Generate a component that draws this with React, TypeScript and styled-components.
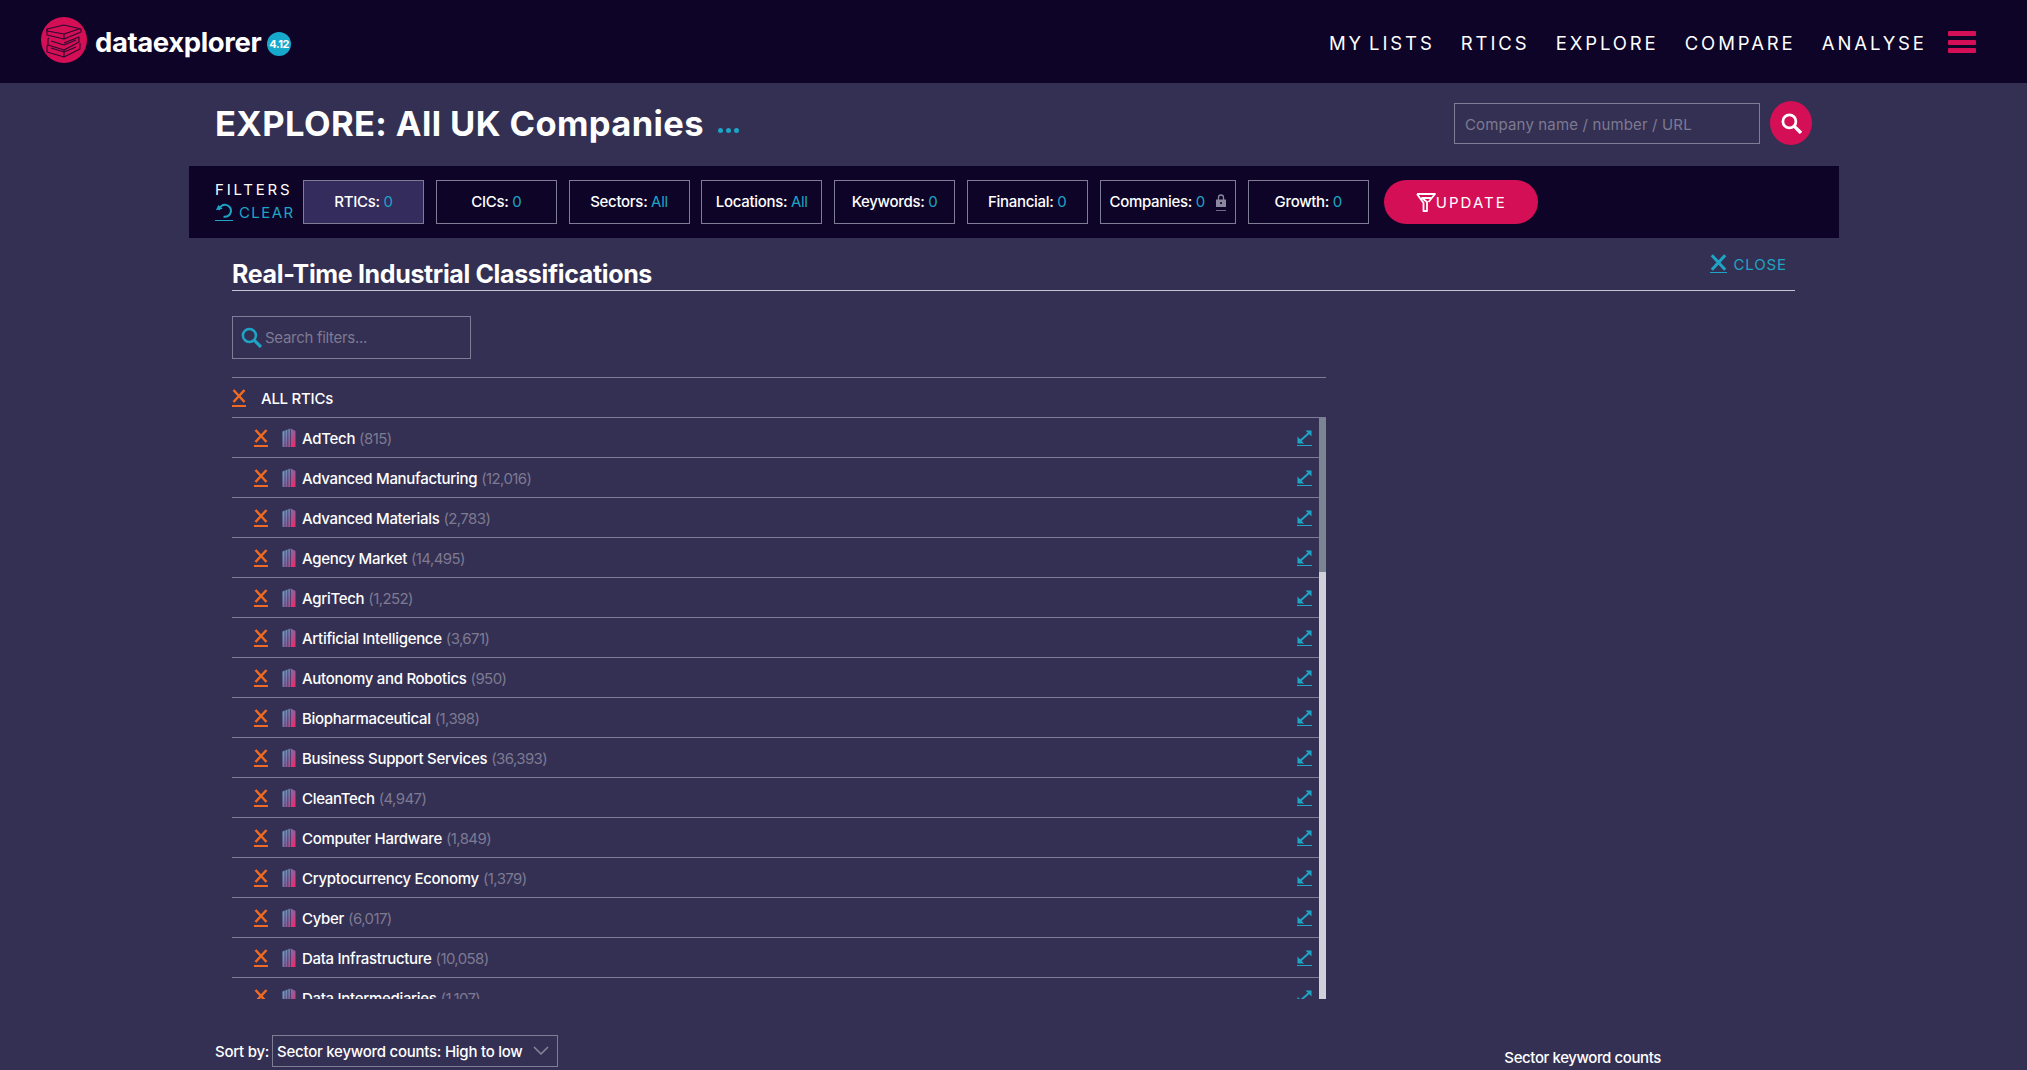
import styled, { createGlobalStyle } from "styled-components"

const rows = [
  ["AdTech", "815"],
  ["Advanced Manufacturing", "12,016"],
  ["Advanced Materials", "2,783"],
  ["Agency Market", "14,495"],
  ["AgriTech", "1,252"],
  ["Artificial Intelligence", "3,671"],
  ["Autonomy and Robotics", "950"],
  ["Biopharmaceutical", "1,398"],
  ["Business Support Services", "36,393"],
  ["CleanTech", "4,947"],
  ["Computer Hardware", "1,849"],
  ["Cryptocurrency Economy", "1,379"],
  ["Cyber", "6,017"],
  ["Data Infrastructure", "10,058"],
  ["Data Intermediaries", "1,107"],
]

const filters = [
  { label: "RTICs", value: "0", active: true },
  { label: "CICs", value: "0" },
  { label: "Sectors", value: "All" },
  { label: "Locations", value: "All" },
  { label: "Keywords", value: "0" },
  { label: "Financial", value: "0" },
  { label: "Companies", value: "0", locked: true },
  { label: "Growth", value: "0" },
]

function Logo() {
  return (
    <svg width="46" height="46" viewBox="0 0 46 46">
      <circle cx="23" cy="23" r="23" fill="#d40f55" />
      <g fill="none" stroke="#2a0a30" strokeWidth="1.1" strokeLinejoin="round">
        <path d="M6 12l17-4 17 4-2 0-15 5-17-3z" />
        <path d="M6 12v6l17 4 17-7v-3M23 17v5" />
        <path d="M8 21l-1 1v6l16 5 15-8v-5l-15 6" />
        <path d="M7 28l-1 1v6l17 5 16-8v-6M23 33v7" />
        <path d="M10 24l13 4 12-5M10 31l13 4 12-5" />
      </g>
    </svg>
  )
}

function CloseX({ size = 14 }: { size?: number }) {
  return (
    <svg width={size} height={size} viewBox="0 0 14 14">
      <path d="M1.5 1l11 12M12.5 1l-11 12" fill="none" stroke="currentColor" strokeWidth="2.5" />
    </svg>
  )
}

function Building({ id }: { id: string }) {
  return (
    <svg width="14" height="19" viewBox="0 0 14 19">
      <defs>
        <linearGradient id={id} x1="0" y1="0.15" x2="1" y2="0.8">
          <stop offset="0" stopColor="#6fa6c8" />
          <stop offset="0.5" stopColor="#7f6ba6" />
          <stop offset="1" stopColor="#ec2a70" />
        </linearGradient>
      </defs>
      <path d="M0.5 3.5L8.5 0.5 13.5 3v16H0.5z" fill={`url(#${id})`} />
      <path d="M3 2.5V19M5.8 1.5V19M8.5 0.5V19" stroke="#353053" strokeWidth="0.8" opacity="0.85" />
    </svg>
  )
}

function SearchGlyph({ size, stroke }: { size: number; stroke: number }) {
  return (
    <svg width={size} height={size} viewBox="0 0 20 20">
      <circle cx="8" cy="8" r="6.2" fill="none" stroke="currentColor" strokeWidth={stroke} />
      <path d="M12.5 12.5L19 19" stroke="currentColor" strokeWidth={stroke + 0.6} />
    </svg>
  )
}

function RowItem({ name, count, index }: { name: string; count: string; index: number }) {
  return (
    <Row>
      <OrangeMark>
        <CloseX />
      </OrangeMark>
      <BuildingSlot>
        <Building id={`building-${index}`} />
      </BuildingSlot>
      <RowName>{name}</RowName>
      <RowCount>({count})</RowCount>
      <ExpandLink>
        <svg width="15" height="14" viewBox="0 0 15 14">
          <path d="M2.5 11.5L12.5 2.5" stroke="currentColor" strokeWidth="2" />
          <path d="M8.5 0.5h6v6z" fill="currentColor" />
          <path d="M0.5 6.5v7h6.5z" fill="currentColor" />
        </svg>
      </ExpandLink>
    </Row>
  )
}

export default function App() {
  return (
    <>
      <GlobalStyle />
      <Header>
        <Brand>
          <Logo />
          <BrandName>dataexplorer</BrandName>
          <Version>4.12</Version>
        </Brand>
        <Nav>
          <NavLink $tight>MY LISTS</NavLink>
          <NavLink>RTICS</NavLink>
          <NavLink>EXPLORE</NavLink>
          <NavLink>COMPARE</NavLink>
          <NavLink>ANALYSE</NavLink>
          <Burger>
            <span />
            <span />
            <span />
          </Burger>
        </Nav>
      </Header>

      <TitleRow>
        <TitleGroup>
          <PageTitle>EXPLORE: All UK Companies</PageTitle>
          <Dots>
            <i />
            <i />
            <i />
          </Dots>
        </TitleGroup>
        <CompanySearch>
          <CompanyInput placeholder="Company name / number / URL" />
          <RoundSearch>
            <SearchGlyph size={21} stroke={2.6} />
          </RoundSearch>
        </CompanySearch>
      </TitleRow>

      <FilterBar>
        <FilterHead>
          <FilterTitle>FILTERS</FilterTitle>
          <ClearLink>
            <ClearIcon>
              <svg width="18" height="15" viewBox="0 0 18 15">
                <path d="M4 7a6 6 0 1 1 4.5 6.6" fill="none" stroke="currentColor" strokeWidth="2" />
                <path d="M0.5 6.5h7L4 2z" fill="currentColor" transform="rotate(-12 4 5)" />
              </svg>
            </ClearIcon>
            CLEAR
          </ClearLink>
        </FilterHead>
        <FilterBoxes>
          {filters.map((f) => (
            <FilterBox key={f.label} $active={f.active} $wide={f.locked}>
              {f.label}: <Accent>{f.value}</Accent>
              {f.locked && (
                <LockIcon>
                  <svg width="10" height="14" viewBox="0 0 10 14">
                    <path d="M2.5 6V3.5a2.5 2.5 0 0 1 5 0V6" fill="none" stroke="currentColor" strokeWidth="1.3" />
                    <path fillRule="evenodd" d="M0 5.5h10V13H0zM5 8a1 1 0 1 0 .01 0z" fill="currentColor" />
                  </svg>
                </LockIcon>
              )}
            </FilterBox>
          ))}
        </FilterBoxes>
        <UpdateButton>
          <svg width="20" height="20" viewBox="0 0 20 20">
            <path d="M1 2h18l-6.5 8M1 2l6.5 9v8h3.5v-9L6 6h9" fill="none" stroke="currentColor" strokeWidth="1.8" strokeLinejoin="round" />
          </svg>
          UPDATE
        </UpdateButton>
      </FilterBar>

      <Panel>
        <PanelHead>
          <PanelTitle>Real-Time Industrial Classifications</PanelTitle>
          <CloseLink>
            <CloseMark>
              <CloseX size={17} />
            </CloseMark>
            CLOSE
          </CloseLink>
        </PanelHead>
        <FilterSearch>
          <SearchIconSlot>
            <SearchGlyph size={21} stroke={2.4} />
          </SearchIconSlot>
          <FilterInput placeholder="Search filters..." />
        </FilterSearch>
        <ListBlock>
          <AllRow>
            <OrangeMark>
              <CloseX />
            </OrangeMark>
            <AllLabel>ALL RTICs</AllLabel>
          </AllRow>
          <ScrollFrame>
            <RowsClip>
              {rows.map(([name, count], i) => (
                <RowItem key={name} name={name} count={count} index={i} />
              ))}
            </RowsClip>
            <Track>
              <Thumb />
            </Track>
          </ScrollFrame>
        </ListBlock>
      </Panel>

      <SortRow>
        <SortGroup>
          <SortLabel>Sort by:</SortLabel>
          <SortSelect>
            Sector keyword counts: High to low
            <svg width="16" height="10" viewBox="0 0 16 10">
              <path d="M1 1l7 7 7-7" fill="none" stroke="currentColor" strokeWidth="1.5" />
            </svg>
          </SortSelect>
        </SortGroup>
        <ChartLabel>Sector keyword counts</ChartLabel>
      </SortRow>
    </>
  )
}

const GlobalStyle = createGlobalStyle`
  html, body {
    margin: 0;
    height: 1070px;
    overflow: hidden;
    background: #343053;
    color: #fff;
    font-family: Inter, "Liberation Sans", sans-serif;
  }
  * { box-sizing: border-box; }
  input::placeholder { color: #7d7a92; opacity: 1; }
`

const Header = styled.header`
  height: 83px;
  background: #0d0428;
  display: flex;
  align-items: center;
  justify-content: space-between;
  padding: 0 51px 3px 41px;
`

const Brand = styled.div`
  display: flex;
  align-items: center;
`

const BrandName = styled.span`
  font-size: 27.5px;
  font-weight: 700;
  letter-spacing: -0.4px;
  margin-left: 8px;
  margin-top: 4px;
`

const Version = styled.span`
  width: 24px;
  height: 24px;
  border-radius: 50%;
  background: #17a9cb;
  font-size: 11px;
  font-weight: 700;
  letter-spacing: -0.4px;
  display: flex;
  align-items: center;
  justify-content: center;
  margin-left: 6px;
  margin-top: 7px;
`

const Nav = styled.nav`
  display: flex;
  align-items: center;
  gap: 29px;
  margin-top: 5px;
`

const NavLink = styled.a<{ $tight?: boolean }>`
  font-size: 18.5px;
  font-weight: 400;
  letter-spacing: 2.9px;
  margin-right: -2.9px;
  word-spacing: ${(p) => (p.$tight ? "-3px" : "0")};
  white-space: nowrap;
`

const Burger = styled.div`
  width: 28px;
  height: 22px;
  margin-left: -5px;
  margin-top: -1px;
  display: flex;
  flex-direction: column;
  justify-content: space-between;
  span {
    display: block;
    height: 5px;
    background: #d40f55;
    border-radius: 1px;
  }
`

const TitleRow = styled.div`
  height: 83px;
  display: flex;
  align-items: center;
  justify-content: space-between;
  padding: 0 215px 3px;
`

const TitleGroup = styled.div`
  display: flex;
  align-items: center;
`

const PageTitle = styled.h1`
  font-size: 34.5px;
  font-weight: 700;
  letter-spacing: 0.4px;
  margin: 0;
`

const Dots = styled.div`
  display: flex;
  gap: 3px;
  margin: 14px 0 0 14px;
  i {
    width: 5px;
    height: 5px;
    border-radius: 50%;
    background: #1ea4c5;
  }
`

const CompanySearch = styled.div`
  display: flex;
  align-items: flex-start;
  gap: 10px;
`

const CompanyInput = styled.input`
  width: 306px;
  height: 41px;
  margin-top: 2px;
  background: transparent;
  border: 1px solid #7f7d95;
  padding: 2px 10px 0;
  color: #fff;
  font: 400 15px Inter, "Liberation Sans", sans-serif;
  letter-spacing: 0.15px;
`

const RoundSearch = styled.button`
  width: 42px;
  height: 44px;
  border: 0;
  border-radius: 50%;
  padding: 0;
  background: #d40f55;
  color: #fff;
  display: flex;
  align-items: center;
  justify-content: center;
`

const FilterBar = styled.section`
  width: 1650px;
  height: 72px;
  margin-left: 189px;
  padding: 0 26px;
  background: #0d0428;
  display: flex;
  align-items: center;
`

const FilterHead = styled.div`
  width: 88px;
  display: flex;
  flex-direction: column;
  gap: 5px;
  margin-top: -1px;
`

const FilterTitle = styled.div`
  font-size: 15px;
  letter-spacing: 2.8px;
  line-height: 18px;
`

const ClearLink = styled.a`
  display: flex;
  align-items: center;
  gap: 6px;
  font-size: 15px;
  letter-spacing: 1.4px;
  line-height: 18px;
  color: #1ea4c5;
`

const ClearIcon = styled.span`
  display: flex;
  border-bottom: 1px solid currentColor;
  padding-bottom: 2px;
  margin-top: -2px;
`

const FilterBoxes = styled.div`
  display: flex;
  gap: 11.75px;
`

const FilterBox = styled.div<{ $active?: boolean; $wide?: boolean }>`
  width: ${(p) => (p.$wide ? "136.5px" : "121px")};
  height: 44px;
  padding-bottom: 2px;
  border: 1px solid #7f7d95;
  background: ${(p) => (p.$active ? "#332c5c" : "transparent")};
  display: flex;
  align-items: center;
  justify-content: center;
  white-space: pre;
  font-size: 15px;
  font-weight: 450;
  letter-spacing: -0.3px;
`

const Accent = styled.span`
  color: #1ea4c5;
  font-weight: 400;
`

const LockIcon = styled.span`
  display: flex;
  color: #8a889e;
  margin-left: 11px;
  border-bottom: 1px solid #6d6b82;
  padding-bottom: 2px;
  margin-top: 3px;
`

const UpdateButton = styled.button`
  width: 154px;
  height: 44px;
  margin-left: 15.5px;
  border: 0;
  border-radius: 22px;
  background: #d40f55;
  color: #fff;
  display: flex;
  align-items: center;
  justify-content: center;
  gap: 0;
  font: 400 15px Inter, "Liberation Sans", sans-serif;
  letter-spacing: 2px;
`

const Panel = styled.section`
  margin: 0 232px;
`

const PanelHead = styled.div`
  height: 53px;
  border-bottom: 1px solid #c4c3d0;
  display: flex;
  justify-content: space-between;
  padding-right: 8px;
`

const PanelTitle = styled.h2`
  font-size: 25px;
  font-weight: 700;
  letter-spacing: -0.35px;
  margin: 22px 0 0;
  line-height: 29px;
`

const CloseLink = styled.a`
  display: flex;
  align-items: flex-start;
  gap: 6px;
  color: #1ea4c5;
  font-size: 15px;
  letter-spacing: 0.9px;
  line-height: 18px;
  margin-top: 18px;
`

const CloseMark = styled.span`
  display: flex;
  margin-top: -2px;
  padding-bottom: 1px;
  border-bottom: 1px solid currentColor;
`

const FilterSearch = styled.div`
  width: 239px;
  height: 43px;
  margin-top: 25px;
  border: 1px solid #7f7d95;
  display: flex;
  align-items: center;
  padding-left: 8px;
  gap: 3px;
`

const SearchIconSlot = styled.span`
  display: flex;
  color: #1ea4c5;
`

const FilterInput = styled.input`
  flex: 1;
  min-width: 0;
  background: transparent;
  border: 0;
  padding: 0;
  color: #fff;
  font: 400 15px Inter, "Liberation Sans", sans-serif;
  letter-spacing: -0.3px;
`

const ListBlock = styled.div`
  width: 1094px;
  margin-top: 18px;
  border-top: 1px solid #7f7d95;
`

const AllRow = styled.div`
  height: 40px;
  padding-top: 2px;
  border-bottom: 1px solid #7f7d95;
  display: flex;
  align-items: center;
`

const AllLabel = styled.span`
  font-size: 15px;
  font-weight: 450;
  letter-spacing: -0.25px;
  margin-left: 15px;
`

const OrangeMark = styled.span`
  width: 14px;
  display: flex;
  flex-direction: column;
  color: #f26a21;
  border-bottom: 2px solid currentColor;
  padding-bottom: 2px;
  margin-top: -1px;
`

const ScrollFrame = styled.div`
  display: flex;
  height: 581px;
`

const RowsClip = styled.div`
  flex: 1;
  overflow: hidden;
`

const Row = styled.div`
  height: 40px;
  padding: 2px 7px 0 22px;
  border-bottom: 1px solid #7f7d95;
  display: flex;
  align-items: center;
`

const BuildingSlot = styled.span`
  display: flex;
  margin-left: 14px;
  margin-top: -3px;
`

const RowName = styled.span`
  margin-left: 6px;
  font-size: 15px;
  font-weight: 450;
  letter-spacing: -0.3px;
`

const RowCount = styled.span`
  margin-left: 4px;
  font-size: 15px;
  letter-spacing: -0.6px;
  color: #7d7a92;
`

const ExpandLink = styled.span`
  margin-left: auto;
  display: flex;
  color: #1ea4c5;
  border-bottom: 1px solid currentColor;
  padding-bottom: 1px;
  margin-top: -2px;
`

const Track = styled.div`
  width: 7px;
  background: #d0d0d8;
`

const Thumb = styled.div`
  height: 154px;
  background: #7b8591;
`

const SortRow = styled.div`
  margin-top: 36px;
  padding: 0 366px 0 215px;
  display: flex;
  justify-content: space-between;
  align-items: flex-end;
`

const SortGroup = styled.div`
  display: flex;
  align-items: center;
  gap: 3px;
`

const SortLabel = styled.span`
  font-size: 15px;
  font-weight: 450;
  letter-spacing: -0.25px;
`

const SortSelect = styled.div`
  width: 286px;
  height: 32px;
  border: 1px solid #7f7d95;
  padding: 0 8px 0 4px;
  display: flex;
  align-items: center;
  justify-content: space-between;
  font-size: 15px;
  font-weight: 450;
  letter-spacing: -0.25px;
  svg {
    color: #8a889e;
  }
`

const ChartLabel = styled.span`
  font-size: 15px;
  font-weight: 450;
  letter-spacing: -0.4px;
  line-height: 18px;
`
